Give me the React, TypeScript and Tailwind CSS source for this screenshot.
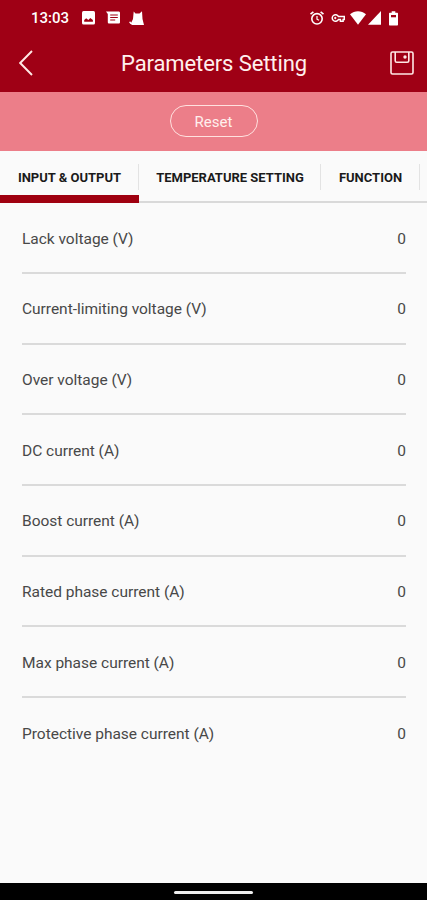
const tabs = [
  { label: 'INPUT & OUTPUT', width: 'w-[139px]', active: true },
  { label: 'TEMPERATURE SETTING', width: 'w-[182px]', active: false },
  { label: 'FUNCTION', width: 'w-[99px]', active: false },
];

const parameters = [
  { label: 'Lack voltage (V)', value: 0 },
  { label: 'Current-limiting voltage (V)', value: 0 },
  { label: 'Over voltage (V)', value: 0 },
  { label: 'DC current (A)', value: 0 },
  { label: 'Boost current (A)', value: 0 },
  { label: 'Rated phase current (A)', value: 0 },
  { label: 'Max phase current (A)', value: 0 },
  { label: 'Protective phase current (A)', value: 0 },
];

function StatusBar() {
  return (
    <div className="flex h-9 items-center pl-[31px] pr-[29px]">
      <span className="w-[51px] pt-px text-[15px] font-medium leading-none">13:03</span>
      {/* Notifications */}
      <svg width="13" height="14" viewBox="0 0 13 14">
        <rect width="13" height="13.5" rx="1.5" fill="white" />
        <path d="M2.2 10.8V9l2-1.8L6.3 9l2-2 2.6 2v1.8Z" fill="#9f0015" />
      </svg>
      <svg className="ml-[11px]" width="14" height="14" viewBox="0 0 14 14">
        <path d="M0 .5h12.6c.8 0 1.4.6 1.4 1.3v9.4c0 .8-.6 1.4-1.4 1.4H3.2c-.8 0-1.4-.6-1.4-1.4V3Z" fill="white" />
        <path d="M4.2 4h7.6M4.2 6.5h7.6M4.2 9h5" stroke="#9f0015" strokeWidth="1.1" />
      </svg>
      <svg className="ml-[9px]" width="15" height="15" viewBox="0 0 15 15">
        <path d="M4.7.5 6.5 2.5h4L13 .3l.5 7.7 1.5 6H3.2l-2-1.2L0 11l1.4-.6.8 1.3L4 8Z" fill="white" />
      </svg>

      {/* System icons */}
      <svg className="ml-auto" width="14" height="14" viewBox="0 0 14 14" fill="none" stroke="white">
        <circle cx="7" cy="7.8" r="5.2" strokeWidth="1.6" />
        <path d="M7 5v3.2l2 1.1" strokeWidth="1.2" />
        <path d="M.5 3.2 3.4.8M13.5 3.2 10.6.8" strokeWidth="1.6" />
      </svg>
      <svg className="ml-[7px]" width="14" height="10" viewBox="0 0 14 10" fill="none" stroke="white" strokeWidth="1.5">
        <path d="M7.4 3.4a3.3 3.3 0 1 0 0 3.2h2V8.2h2.7V6.6h1.2V3.4Z" />
        <circle cx="4.3" cy="5" r=".9" fill="white" strokeWidth=".5" />
      </svg>
      <svg className="ml-[5px]" width="16" height="14" viewBox="0 0 17 14" preserveAspectRatio="none">
        <path d="M0 3.2C5-.7 12-.7 17 3.2L8.5 13.7Z" fill="white" />
      </svg>
      <svg className="ml-0.5" width="13" height="14" viewBox="0 0 14 14" preserveAspectRatio="none">
        <path d="M14 0v13.7H0Z" fill="white" />
      </svg>
      <svg className="ml-2" width="9" height="15" viewBox="0 0 9 15">
        <path d="M2.7.3h3.6v1.5H8c.6 0 1 .4 1 1v10.7c0 .6-.4 1-1 1H1c-.6 0-1-.4-1-1V2.8c0-.6.4-1 1-1h1.7Z" fill="white" />
        <path d="M2 4h5v2.3H2Z" fill="#9f0015" />
      </svg>
    </div>
  );
}

export default function App() {
  return (
    <div className="flex h-[900px] w-[427px] flex-col overflow-hidden bg-[#fafafa] font-[Roboto,sans-serif]">
      <header className="h-[92px] shrink-0 bg-[#9f0015] text-white">
        <StatusBar />
        <div className="flex h-[54px] items-center justify-between pl-[19px] pr-[13px]">
          <svg width="14" height="26" viewBox="0 0 14 26" fill="none" stroke="#ffe8e5" strokeWidth="1.9">
            <path d="M13 1 1.2 13 13 25" />
          </svg>
          <h1 className="pl-[5px] pt-px text-[22px] leading-none tracking-[-0.1px] text-[#fff0ee]">Parameters Setting</h1>
          <svg width="24" height="24" viewBox="0 0 24 24" fill="none" stroke="#ffe8e5" strokeWidth="1.6">
            <rect x="1" y="1" width="22" height="22" rx="1.5" />
            <path d="M5.2 1v8.8q0 1.5 1.5 1.5h10.6q1.5 0 1.5-1.5V1" />
            <circle cx="15" cy="6" r=".9" />
          </svg>
        </div>
      </header>

      <div className="flex h-[58.5px] shrink-0 items-center justify-center bg-[#ec7e89]">
        <button className="h-8 w-[88px] rounded-full border-[1.5px] border-[#ffe1df] pt-0.5 text-[15px] leading-none text-[#ffefed]">
          Reset
        </button>
      </div>

      <nav className="flex h-[52.5px] shrink-0 border-b-2 border-[#d9d9d9]">
        {tabs.map((tab) => (
          <div key={tab.label} className={`relative flex shrink-0 items-center justify-center ${tab.width}`}>
            <span className="whitespace-nowrap pt-[3px] text-[13px] font-bold text-[#1a1a1a]">{tab.label}</span>
            <span className="absolute right-0 top-[13px] h-[26px] w-px bg-[#e3e3e3]" />
            {tab.active && <span className="absolute inset-x-0 -bottom-[2px] h-2 bg-[#9f0010]" />}
          </div>
        ))}
      </nav>

      <ul className="flex-1 pl-[22px] pr-[21px] pt-[0.5px] text-[15.5px] text-[#484848]">
        {parameters.map((item) => (
          <li
            key={item.label}
            className="flex h-[70.65px] items-center justify-between border-b-2 border-[#dadada] pt-[3px] last:border-b-0"
          >
            <span className="tracking-[-0.02px]">{item.label}</span>
            <span>{item.value}</span>
          </li>
        ))}
      </ul>

      <footer className="flex h-[17px] shrink-0 items-center justify-center bg-black pt-0.5">
        <div className="h-[3px] w-[79px] rounded-full bg-[#eeeeee]" />
      </footer>
    </div>
  );
}
